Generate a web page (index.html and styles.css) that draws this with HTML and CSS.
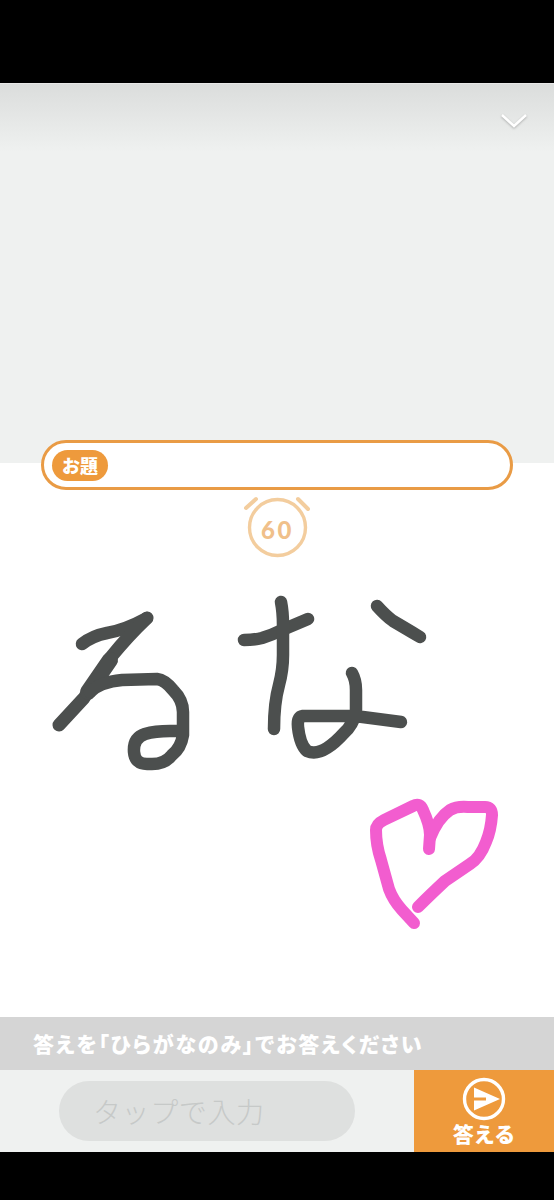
FILE: index.html
```html
<!DOCTYPE html>
<html lang="ja">
<head>
<meta charset="utf-8">
<title>お題</title>
<link rel="stylesheet" href="styles.css">
</head>
<body>
<div class="screen">
  <div class="black top-black"></div>
  <section class="panel">
    <svg class="chevron" viewBox="0 0 28 16" width="28" height="16"><path d="M2 2 L14 13 L26 2" fill="none" stroke="#fff" stroke-width="2.4"/></svg>
  </section>
  <main class="stage">
    <div class="question"><span class="tag">お題</span></div>
    <div class="timer">
      <svg class="clock" viewBox="0 0 70 64" width="70" height="64">
        <circle cx="35.5" cy="32.5" r="28" fill="none" stroke="#f3cd9e" stroke-width="3.4"/>
        <path d="M4 13 L14 4 M66 14 L56 4" stroke="#f3cd9e" stroke-width="4" stroke-linecap="round"/>
      </svg>
      <span class="count">60</span>
    </div>
    <svg class="canvas" viewBox="0 463 554 554" width="554" height="554">
      <g class="ink">
        <path d="M82 644 Q92 636 107 633 Q125 630 147 618"/>
        <path d="M147 618 Q128 636 111 657 Q96 678 84 698 L59 725" class="thick"/>
        <path d="M110 660 L88 692" class="wedge"/>
        <path d="M90 692 Q100 682 122 680 L157 679 Q165 680 173 690 Q183 700 183 712 L183 735 Q181 748 172 755 Q165 764 152 764 L147 764 Q135 764 134 752 Q133 738 145 734 Q155 731 170 731 L182 731"/>
        <path d="M244 640 Q254 640 262 638 Q272 635 282 630 L308 619"/>
        <path d="M281 602 Q283 612 283 625 L283 655 Q283 670 279 685 Q274 703 274 729"/>
        <path d="M377 606 Q386 616 393 621 Q405 628 420 637"/>
        <path d="M352 673 Q356 680 356 690 L356 712 Q353 725 344 733 Q335 743 327 748 Q316 755 307 751 Q300 745 298 727 Q297 717 303 716 L355 716 L401 722"/>
      </g>
      <g class="heart">
        <path d="M414 923 L402 910 Q393 900 389 889 L381 860 Q376 845 376 830 Q376 824 384 820 L413 806 Q420 802 423 810 Q430 825 430 835 L429 849"/>
        <path d="M430 838 Q438 818 450 810 Q457 806 468 807 L485 807 Q492 807 492 815 Q491 830 486 842 Q480 858 470 864 L445 881 Q430 895 418 907"/>
      </g>
    </svg>
  </main>
  <div class="hint">答えを「ひらがなのみ」でお答えください</div>
  <div class="answer-row">
    <div class="input-wrap"><div class="input">タップで入力</div></div>
    <button class="answer">
      <svg viewBox="0 0 44 44" width="44" height="44"><circle cx="22" cy="22" r="19.5" fill="none" stroke="#fff" stroke-width="3.4"/><path d="M12 10.5 L38 22 L12 33.5 L12 23.5 L24 23.5 L24 20.5 L12 20.5 Z" fill="#fff"/></svg>
      <span>答える</span>
    </button>
  </div>
  <div class="black bottom-black"></div>
</div>
</body>
</html>
```

FILE: styles.css
```css
* { box-sizing: border-box; }
html, body { margin: 0; padding: 0; }
body { font-family: "Noto Sans CJK JP", "Noto Sans", sans-serif; background: #000; }
.screen { width: 554px; height: 1200px; display: flex; flex-direction: column; overflow: hidden; }
.black { background: #000; flex: none; }
.top-black { height: 83px; }
.bottom-black { height: 48px; }
.panel { position: relative; height: 380px; flex: none; background: linear-gradient(#dbdddc 0, #eff1f0 68px); border-top: 1px solid #e8e8e8; }
.chevron { position: absolute; left: 500px; top: 29px; filter: drop-shadow(0 1px 1px rgba(0,0,0,.25)); }
.stage { position: relative; flex: 1; background: #fff; display: flex; flex-direction: column; align-items: center; }
.question { position: relative; z-index: 1; width: 472px; height: 50px; margin-top: -23px; border: 3px solid #e99b45; border-radius: 25px; background: #fff; padding: 7px 8px; display: flex; align-items: center; }
.tag { width: 56px; height: 31px; border-radius: 16px; background: #ee9a3c; color: #fff; font-size: 18px; font-weight: 900; display: flex; align-items: center; justify-content: center; line-height: 1; }
.timer { position: relative; width: 70px; height: 64px; margin-top: 5px; z-index: 1; }
.clock { display: block; }
.count { position: absolute; left: 1px; right: 0; top: 22px; text-align: center; font-family: "Lato", sans-serif; font-size: 24px; line-height: 26px; font-weight: 900; letter-spacing: 2.5px; color: #f0c08a; }
.canvas { position: absolute; left: 0; top: 0; }
.ink path, .heart path { fill: none; stroke-linecap: round; stroke-linejoin: round; }
.ink path { stroke: #4c4f4e; stroke-width: 12.5; }
.ink path.thick { stroke-width: 13; }
.ink path.wedge { stroke-width: 16; }
.heart path { stroke: #f25dcf; stroke-width: 12; }
.hint { height: 53px; flex: none; background: #d5d5d5; color: #fff; font-size: 21px; font-weight: 900; font-feature-settings: "palt"; letter-spacing: 1.85px; padding-left: 33px; display: flex; align-items: center; line-height: 1; }
.answer-row { height: 82px; flex: none; display: flex; background: #eff1f0; }
.input-wrap { flex: 1; padding: 11px 59px; }
.input { height: 60px; border-radius: 30px; background: #dee0df; color: #c6c9c8; font-size: 28px; font-weight: 300; letter-spacing: .6px; padding-left: 34px; display: flex; align-items: center; line-height: 1; }
.answer { width: 140px; flex: none; border: 0; padding: 7px 0 0; background: #ee9a3c; color: #fff; font-family: inherit; font-size: 21px; font-weight: 900; line-height: 1; display: flex; flex-direction: column; align-items: center; gap: 2px; }
.answer svg { display: block; }
```
